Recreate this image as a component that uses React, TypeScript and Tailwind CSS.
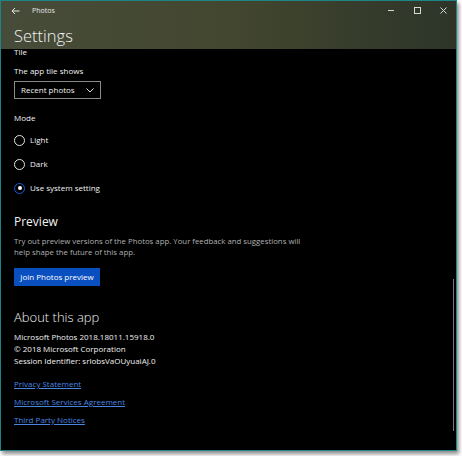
import React from "react";

const font = { fontFamily: '"Open Sans", "Noto Sans", sans-serif' };

function Radio({ label, checked }: { label: string; checked?: boolean }) {
  return (
    <div className="flex items-center gap-[5px] h-[12px]">
      {checked ? (
        <div className="w-[11px] h-[11px] rounded-full border-[1.5px] border-[#1a5ad6] flex items-center justify-center">
          <div className="w-[4px] h-[4px] rounded-full bg-white" />
        </div>
      ) : (
        <div className="w-[11px] h-[11px] rounded-full border-[1.5px] border-[#e6e6e6]" />
      )}
      <span className="text-[8px] text-[#f2f2f2] leading-none">{label}</span>
    </div>
  );
}

export default function App() {
  return (
    <div className="w-[462px] h-[456px] bg-white overflow-hidden" style={font}>
      <div className="relative w-[457px] h-[451px] border border-[#1d8585] bg-black flex flex-col shadow-[2px_3px_4px_rgba(0,0,0,0.45)]">
        {/* title bar */}
        <div className="h-[48px] bg-gradient-to-r from-[#474c3a] via-[#43472f] to-[#2d3529] relative shrink-0">
          <div className="flex items-center h-[18px] pl-[10px]">
            <svg width="9" height="8" viewBox="0 0 9 8" className="mt-[1px]">
              <path d="M8.5 4H1M4 1L1 4l3 3" stroke="#e6e6e6" strokeWidth="1" fill="none" />
            </svg>
            <span className="ml-[12px] text-[7px] text-[#e8e8e8] leading-none">Photos</span>
            <div className="ml-auto flex items-center">
              <div className="w-[26px] flex justify-center">
                <div className="w-[6px] h-px bg-[#d8d8d8]" />
              </div>
              <div className="w-[26px] flex justify-center">
                <div className="w-[7px] h-[7px] border border-[#d8d8d8]" />
              </div>
              <div className="w-[26px] flex justify-center">
                <svg width="7" height="7" viewBox="0 0 7 7">
                  <path d="M0.5 0.5l6 6M6.5 0.5l-6 6" stroke="#d8d8d8" strokeWidth="1" />
                </svg>
              </div>
            </div>
          </div>
          <div className="pl-[13px] mt-[9px] text-[16.5px] text-[#f4f4f4] leading-none font-light">Settings</div>
        </div>

        {/* content */}
        <div className="flex flex-col pl-[13px] text-[#f2f2f2]">
          <div className="text-[8px] leading-none mt-[-1px]">Tile</div>
          <div className="text-[8px] leading-none mt-[11px]">The app tile shows</div>
          <div className="mt-[6px] w-[87px] h-[18px] border border-[#8a8a8a] flex items-center pl-[6px] pr-[6px]">
            <span className="text-[8px] leading-none">Recent photos</span>
            <svg width="8" height="5" viewBox="0 0 8 5" className="ml-auto">
              <path d="M0.5 0.5L4 4l3.5-3.5" stroke="#e0e0e0" strokeWidth="1" fill="none" />
            </svg>
          </div>
          <div className="text-[8px] leading-none mt-[15px]">Mode</div>
          <div className="flex flex-col gap-[12px] mt-[12px]">
            <Radio label="Light" />
            <Radio label="Dark" />
            <Radio label="Use system setting" checked />
          </div>

          <div className="text-[12px] leading-none mt-[22px]">Preview</div>
          <div className="text-[7.8px] leading-[11px] text-[#b0b0b0] mt-[8px] w-[295px]">
            Try out preview versions of the Photos app. Your feedback and suggestions will help shape the future of this app.
          </div>
          <div className="mt-[10px] w-[86px] h-[18px] bg-[#0a4fbf] flex items-center justify-center text-[8px] text-white leading-none">
            Join Photos preview
          </div>

          <div className="text-[13px] leading-none mt-[25px] font-light">About this app</div>
          <div className="text-[8px] leading-[12px] mt-[7px]">
            <div>Microsoft Photos 2018.18011.15918.0</div>
            <div>© 2018 Microsoft Corporation</div>
            <div>Session Identifier: srlobsVaOUyuaiAJ.0</div>
          </div>
          <div className="flex flex-col gap-[9px] mt-[12px] text-[8px] leading-[9px] text-[#4a86e0]">
            <span className="underline">Privacy Statement</span>
            <span className="underline">Microsoft Services Agreement</span>
            <span className="underline">Third Party Notices</span>
          </div>
        </div>

        {/* scrollbar */}
        <div className="absolute right-[2px] top-[278px] w-px h-[152px] bg-[#7a7a7a]" />
      </div>
    </div>
  );
}
